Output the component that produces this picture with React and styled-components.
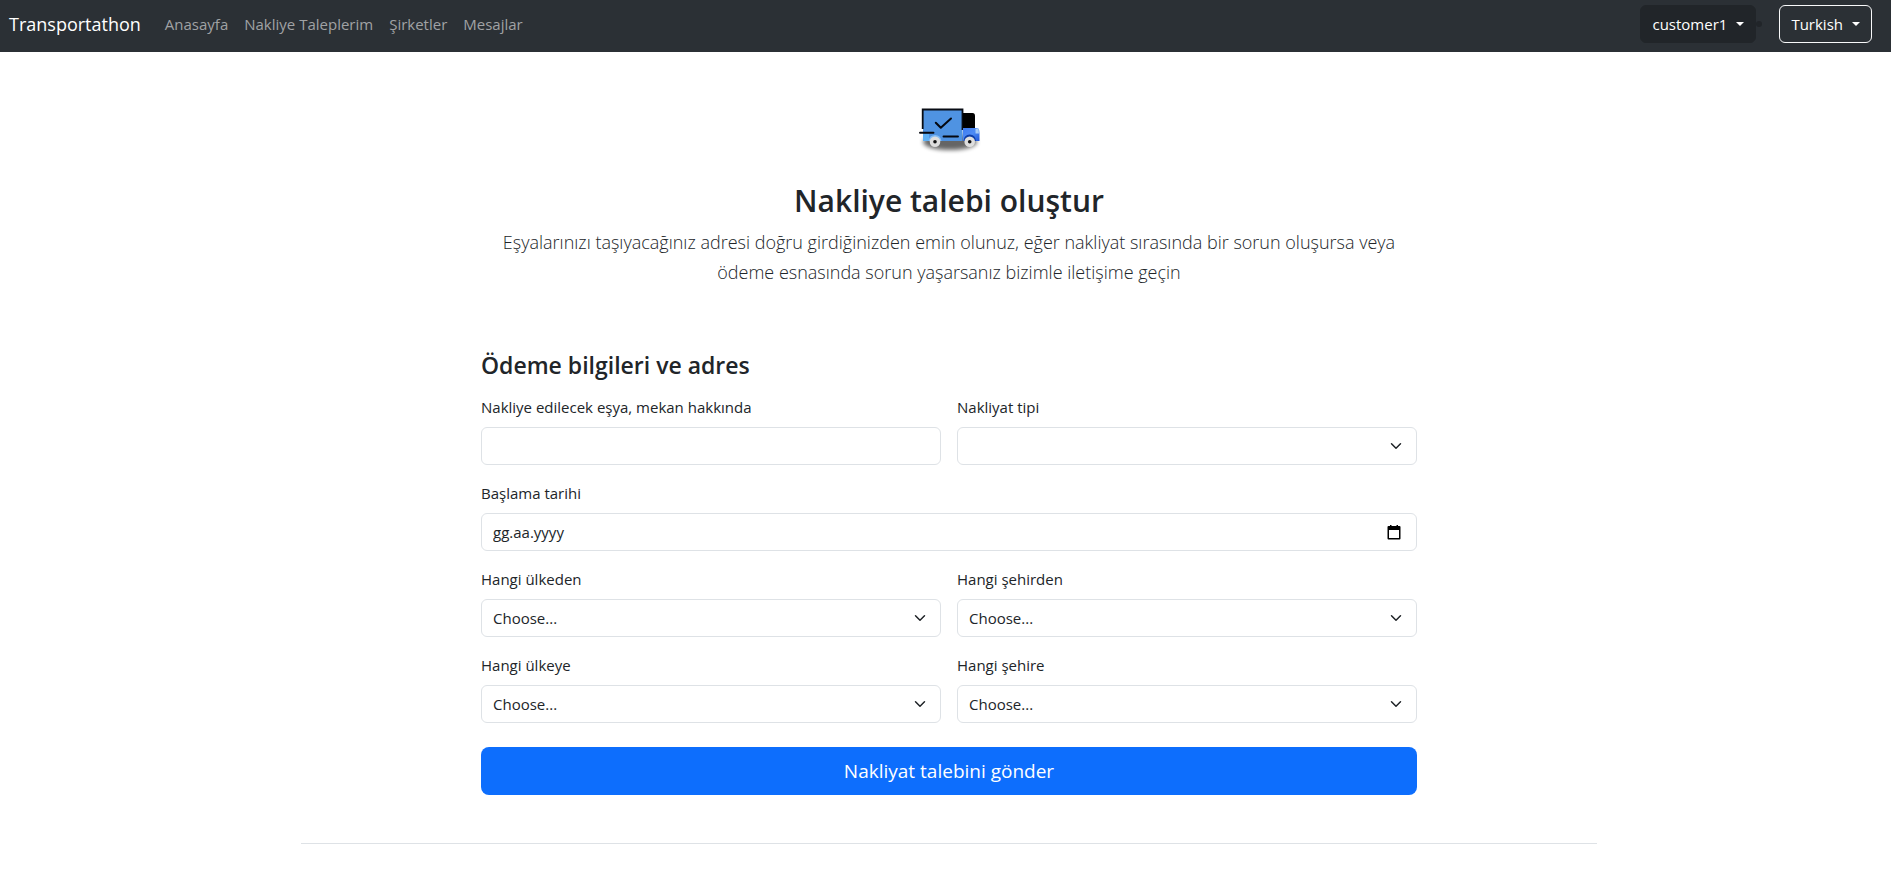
import React from "react";
import styled, { createGlobalStyle } from "styled-components";

const GlobalStyle = createGlobalStyle`
  *, *::before, *::after { box-sizing: border-box; }
  body {
    margin: 0;
    background: #fff;
    color: #212529;
    font-family: "Segoe UI", "Open Sans", "Noto Sans", sans-serif;
    font-size: 15px;
    line-height: 24px;
  }
  button, input, select { font: inherit; color: inherit; margin: 0; }
`;

const Navbar = styled.nav`
  display: flex;
  align-items: center;
  height: 52px;
  padding: 0 19px 4px 9px;
  background: #2b3035;
`;

const Brand = styled.a`
  margin-right: 24px;
  color: #fff;
  font-size: 18px;
  line-height: 30px;
  text-decoration: none;
`;

const NavLinks = styled.div`
  display: flex;
  gap: 16px;
  flex: 1;
`;

const NavLink = styled.a`
  color: #a0a2a4;
  text-decoration: none;
`;

const NavActions = styled.div`
  display: flex;
  align-items: center;
`;

const Dot = styled.span`
  width: 6px;
  height: 6px;
  margin-right: 17px;
  border-radius: 50%;
  background: #212529;
`;

const DropdownButton = styled.button`
  display: flex;
  align-items: center;
  gap: 9px;
  height: 38px;
  padding: 0 11px;
  border: 1px solid ${(p) => (p.$outline ? "#f8f9fa" : "#212529")};
  border-radius: 6px;
  background: ${(p) => (p.$outline ? "transparent" : "#212529")};
  color: #fff;
  cursor: pointer;

  &::after {
    content: "";
    border-top: 4px solid;
    border-left: 4px solid transparent;
    border-right: 4px solid transparent;
  }
`;

const Page = styled.main`
  max-width: 1327px;
  margin: 0 auto;
  padding: 0 12px 0 19px;
`;

const Content = styled.div`
  max-width: 936px;
  margin: 0 auto;
`;

const Intro = styled.header`
  display: flex;
  flex-direction: column;
  align-items: center;
  padding: 48px 0 64px;
  text-align: center;
`;

const Logo = styled.svg`
  width: 72px;
  height: 57px;
  margin-bottom: 24px;
`;

const Title = styled.h1`
  margin: 0 0 6px;
  font-size: 30px;
  font-weight: 600;
  line-height: 40px;
`;

const Lead = styled.p`
  margin: 0;
  font-size: 18px;
  font-weight: 300;
  line-height: 30px;
`;

const SectionTitle = styled.h2`
  margin: 0 0 16px;
  font-size: 23px;
  font-weight: 600;
  line-height: 28px;
`;

const Fields = styled.div`
  display: grid;
  grid-template-columns: 1fr 1fr;
  gap: 16px;
`;

const FieldBox = styled.div`
  display: flex;
  flex-direction: column;
  gap: 8px;
  grid-column: ${(p) => (p.$wide ? "1 / -1" : "auto")};
`;

const Control = styled.div`
  display: flex;
  align-items: center;
  height: 38px;
  padding-right: ${(p) => (p.$withButton ? "13px" : "0")};
  border: 1px solid #dee2e6;
  border-radius: 6px;
  background: #fff;
`;

const TextInput = styled.input`
  flex: 1;
  min-width: 0;
  height: 36px;
  padding: 0 11px;
  border: 0;
  border-radius: 6px;
  background: transparent;

  &::placeholder { color: #212529; opacity: 1; }
`;

const CalendarButton = styled.button`
  display: flex;
  padding: 2px;
  border: 0;
  background: none;
  cursor: pointer;
`;

const chevron =
  "data:image/svg+xml,%3Csvg xmlns='http://www.w3.org/2000/svg' viewBox='0 0 16 16'%3E%3Cpath fill='none' stroke='%23212529' stroke-linecap='round' stroke-linejoin='round' stroke-width='2' d='m2 5 6 6 6-6'/%3E%3C/svg%3E";

const Select = styled.select`
  width: 100%;
  height: 38px;
  padding: 0 36px 0 11px;
  border: 1px solid #dee2e6;
  border-radius: 6px;
  background: #fff url("${chevron}") no-repeat right 14px center / 12px 12px;
  appearance: none;
`;

const SubmitButton = styled.button`
  width: 100%;
  height: 48px;
  margin-top: 24px;
  border: 0;
  border-radius: 8px;
  background: #0d6efd;
  color: #fff;
  font-size: 19px;
  line-height: 30px;
  cursor: pointer;
`;

const Divider = styled.hr`
  height: 1px;
  margin: 48px 0 0;
  border: 0;
  background: #dee2e6;
`;

function TruckLogo() {
  return (
    <Logo viewBox="0 0 72 57" role="img" aria-label="Transportathon">
      <defs>
        <filter id="soft" x="-20%" y="-60%" width="140%" height="220%">
          <feGaussianBlur stdDeviation="2" />
        </filter>
        <linearGradient id="cab" x1="0" x2="1" y1="0" y2="1">
          <stop offset="0" stopColor="#3f7cf0" />
          <stop offset="0.5" stopColor="#4e8cf5" />
          <stop offset="1" stopColor="#1f55d8" />
        </linearGradient>
      </defs>
      <ellipse cx="37" cy="42" rx="27" ry="8" fill="#000" opacity="0.6" filter="url(#soft)" />
      <path d="M10 10H49.500V41H10Z" fill="#4f93e2" />
      <path d="M10 34H16V41H10Z" fill="#5fb0f5" />
      <path d="M9.700 29V9.500H49.500V30" fill="none" stroke="#080c14" strokeWidth="1.800" />
      <path d="M50 13H59.500Q62 13 62 16V28H50Z" fill="#000" />
      <path d="M50 28H62L65.500 28.500Q66.500 30 66.500 33V41H50Z" fill="url(#cab)" />
      <path d="M62.500 29H65.500L66 33.500H62.500Z" fill="#a8ccf5" />
      <path d="M50.500 41Q51 34.500 56.700 34.500T63 41Z" fill="#0d3da6" />
      <path d="M15.500 41Q16.500 35 22 35T28.500 41Z" fill="#87bdf3" />
      <path d="M7 32.700H20.500M30.500 36.500H45" stroke="#05080f" strokeWidth="1.900" strokeLinecap="round" />
      <path d="M22.800 22.700L27.800 27.800L38 18.500" fill="none" stroke="#05080f" strokeWidth="2" strokeLinecap="round" strokeLinejoin="round" />
      {[22, 56.7].map((cx) => (
        <g key={cx}>
          <circle cx={cx} cy="41.700" r="5.300" fill="#dedede" />
          <circle cx={cx} cy="41.700" r="1.800" fill="#111" />
        </g>
      ))}
    </Logo>
  );
}

function CalendarIcon() {
  return (
    <svg width="14" height="15" viewBox="0 0 14 15" aria-hidden="true">
      <path d="M3 0H4.500V1H9.500V0H11V1H12.500Q13.500 1 13.500 2V13.500Q13.500 14.500 12.500 14.500H1.500Q0.500 14.500 0.500 13.500V2Q0.500 1 1.500 1H3ZM2 5V13H12V5Z" fill="#000" fillRule="evenodd" />
    </svg>
  );
}

function SelectField({ id, label, placeholder = "Choose..." }) {
  return (
    <FieldBox>
      <label htmlFor={id}>{label}</label>
      <Select id={id} defaultValue="">
        <option value="">{placeholder}</option>
      </Select>
    </FieldBox>
  );
}

export default function App() {
  return (
    <>
      <GlobalStyle />
      <Navbar>
        <Brand href="#">Transportathon</Brand>
        <NavLinks>
          <NavLink href="#">Anasayfa</NavLink>
          <NavLink href="#">Nakliye Taleplerim</NavLink>
          <NavLink href="#">Şirketler</NavLink>
          <NavLink href="#">Mesajlar</NavLink>
        </NavLinks>
        <NavActions>
          <DropdownButton type="button">customer1</DropdownButton>
          <Dot />
          <DropdownButton type="button" $outline>Turkish</DropdownButton>
        </NavActions>
      </Navbar>
      <Page>
        <Content>
          <Intro>
            <TruckLogo />
            <Title>Nakliye talebi oluştur</Title>
            <Lead>
              Eşyalarınızı taşıyacağınız adresi doğru girdiğinizden emin olunuz, eğer nakliyat
              sırasında bir sorun oluşursa veya ödeme esnasında sorun yaşarsanız bizimle iletişime
              geçin
            </Lead>
          </Intro>
          <form onSubmit={(e) => e.preventDefault()}>
            <SectionTitle>Ödeme bilgileri ve adres</SectionTitle>
            <Fields>
              <FieldBox>
                <label htmlFor="about">Nakliye edilecek eşya, mekan hakkında</label>
                <Control>
                  <TextInput id="about" type="text" />
                </Control>
              </FieldBox>
              <SelectField id="type" label="Nakliyat tipi" placeholder="" />
              <FieldBox $wide>
                <label htmlFor="start">Başlama tarihi</label>
                <Control $withButton>
                  <TextInput id="start" type="text" placeholder="gg.aa.yyyy" />
                  <CalendarButton type="button" aria-label="Başlama tarihi">
                    <CalendarIcon />
                  </CalendarButton>
                </Control>
              </FieldBox>
              <SelectField id="from-country" label="Hangi ülkeden" />
              <SelectField id="from-city" label="Hangi şehirden" />
              <SelectField id="to-country" label="Hangi ülkeye" />
              <SelectField id="to-city" label="Hangi şehire" />
            </Fields>
            <SubmitButton type="submit">Nakliyat talebini gönder</SubmitButton>
          </form>
        </Content>
        <Divider />
      </Page>
    </>
  );
}
